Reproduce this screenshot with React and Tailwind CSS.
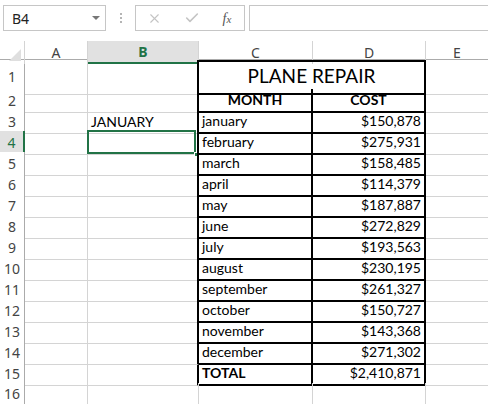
import { X, Check } from 'lucide-react'

const rows = [
  ['january', '$150,878'],
  ['february', '$275,931'],
  ['march', '$158,485'],
  ['april', '$114,379'],
  ['may', '$187,887'],
  ['june', '$272,829'],
  ['july', '$193,563'],
  ['august', '$230,195'],
  ['september', '$261,327'],
  ['october', '$150,727'],
  ['november', '$143,368'],
  ['december', '$271,302'],
]

const cols = 'grid grid-cols-[25px_63px_111px_114px_113px_1fr]'
const cellFont = { fontFamily: 'Lato, "Liberation Sans", sans-serif' }
const uiFont = { fontFamily: '"Noto Sans", "Open Sans", sans-serif' }

function RowHead({ n, active }) {
  return (
    <div
      className={`flex items-center justify-center text-[14px] border-b border-[#d4d4d4] ${
        active ? 'bg-[#e1e1e1] text-[#217346] border-r-2 border-r-[#217346]' : 'bg-white text-[#444] border-r border-r-[#ababab]'
      }`}
      style={uiFont}
    >
      {n}
    </div>
  )
}

function Cell({ className = '', children }) {
  return (
    <div className={`flex items-end px-[3px] pb-[1px] text-[14px] text-black border-b border-r border-[#d4d4d4] ${className}`} style={cellFont}>
      {children}
    </div>
  )
}

export default function App() {
  return (
    <div className="w-[488px] h-[404px] overflow-hidden bg-white select-none">
      {/* formula bar */}
      <div className="h-[41px] flex items-start pt-[5px] pl-[3px]">
        <div className="w-[103px] h-[26px] border border-[#c6c6c6] flex items-center justify-between pl-[8px] pr-[5px]">
          <span className="text-[14px] text-[#222]" style={uiFont}>B4</span>
          <span className="w-0 h-0 border-l-[4px] border-r-[4px] border-t-[4px] border-l-transparent border-r-transparent border-t-[#777]" />
        </div>
        <div className="w-[29px] h-[26px] flex flex-col items-center justify-center gap-[2px]">
          <span className="w-[2px] h-[2px] bg-[#b5b5b5]" />
          <span className="w-[2px] h-[2px] bg-[#b5b5b5]" />
          <span className="w-[2px] h-[2px] bg-[#b5b5b5]" />
        </div>
        <div className="w-[110px] h-[26px] border border-[#c6c6c6] flex items-center">
          <div className="w-[37px] flex justify-center">
            <X className="size-[15px] text-[#c4c4c4]" strokeWidth={1.8} />
          </div>
          <div className="w-[37px] flex justify-center">
            <Check className="size-[16px] text-[#c4c4c4]" strokeWidth={2.4} />
          </div>
          <div className="w-[34px] flex justify-center">
            <span className="text-[14px] italic text-[#555]" style={{ fontFamily: '"Liberation Serif", serif' }}>
              f<span className="text-[11px]">x</span>
            </span>
          </div>
        </div>
        <div className="ml-[4px] flex-1 h-[26px] border border-r-0 border-[#c6c6c6]" />
      </div>

      {/* column headers */}
      <div className={`${cols} h-[19px] border-b border-[#ababab]`} style={uiFont}>
        <div className="relative border-r border-[#d4d4d4]">
          <svg className="absolute right-[3px] bottom-[3px]" width="12" height="12" viewBox="0 0 12 12">
            <polygon points="12,0 12,12 0,12" fill="#dfdfdf" />
          </svg>
        </div>
        <div className="flex items-center justify-center text-[14px] text-[#444] border-r border-[#d4d4d4]">A</div>
        <div className="flex items-center justify-center text-[14px] font-bold text-[#217346] bg-[#e1e1e1] border-b-2 border-[#217346] border-r border-r-[#d4d4d4]">B</div>
        <div className="flex items-center justify-center text-[14px] text-[#444] border-r border-[#d4d4d4]">C</div>
        <div className="flex items-center justify-center text-[14px] text-[#444] border-r border-[#d4d4d4]">D</div>
        <div className="flex items-center justify-center text-[14px] text-[#444]">E</div>
      </div>

      {/* row 1 */}
      <div className={`${cols} h-[29px]`}>
        <RowHead n={1} />
        <Cell />
        <Cell className="border-r-2 border-r-black" />
        <div className="col-span-2 flex items-end justify-center pb-[2px] text-[19px] text-black border-t-2 border-b-2 border-r-2 border-black" style={cellFont}>
          PLANE REPAIR
        </div>
        <Cell className="border-r-0" />
      </div>

      {/* row 2 */}
      <div className={`${cols} h-[21px]`}>
        <RowHead n={2} />
        <Cell />
        <Cell className="border-r-2 border-r-black" />
        <Cell className="justify-center font-bold border-b-2 border-r-2 border-black">MONTH</Cell>
        <Cell className="justify-center font-bold border-b-2 border-r-2 border-black">COST</Cell>
        <Cell className="border-r-0" />
      </div>

      {rows.map(([m, c], i) => {
        const n = i + 3
        const active = n === 4
        return (
          <div key={m} className={`${cols} h-[21px]`}>
            <RowHead n={n} active={active} />
            <Cell />
            <Cell className="relative border-r-2 border-r-black">
              {n === 3 ? 'JANUARY' : ''}
              {active && (
                <>
                  <span className="absolute left-[-1px] top-[-1px] right-[1px] bottom-[0px] border-2 border-[#217346]" />
                  <span className="absolute right-[-2px] bottom-[-3px] w-[5px] h-[5px] bg-[#217346] border border-white" />
                </>
              )}
            </Cell>
            <Cell className="border-b-2 border-r-2 border-black">{m}</Cell>
            <Cell className="justify-end border-b-2 border-r-2 border-black">{c}</Cell>
            <Cell className="border-r-0" />
          </div>
        )
      })}

      {/* row 15 */}
      <div className={`${cols} h-[21px]`}>
        <RowHead n={15} />
        <Cell />
        <Cell className="border-r-2 border-r-black" />
        <Cell className="font-bold border-b-2 border-r-2 border-black">TOTAL</Cell>
        <Cell className="justify-end border-b-2 border-r-2 border-black">$2,410,871</Cell>
        <Cell className="border-r-0" />
      </div>

      {/* row 16 */}
      <div className={`${cols} h-[21px]`}>
        <RowHead n={16} />
        <Cell />
        <Cell />
        <Cell />
        <Cell />
        <Cell className="border-r-0" />
      </div>
    </div>
  )
}
